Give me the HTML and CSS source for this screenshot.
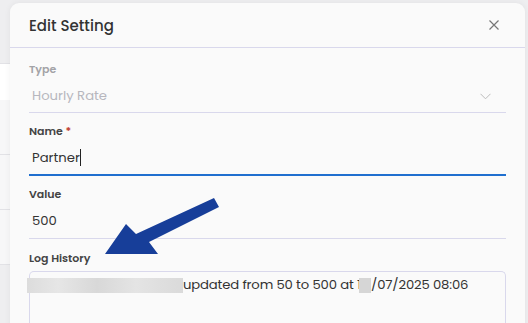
FILE: index.html
```html
<!DOCTYPE html>
<html>
<head>
<meta charset="utf-8">
<link rel="stylesheet" href="styles.css">
</head>
<body>
<div class="backdrop">
  <div class="bg-rows">
    <div class="bg-gap"></div>
    <div class="bg-white"></div>
    <div class="bg-row"></div>
    <div class="bg-row"></div>
    <div class="bg-row"></div>
  </div>
  <div class="modal">
    <div class="modal-header">
      <h2 class="title">Edit Setting</h2>
      <svg class="close" width="10" height="10" viewBox="0 0 10 10"><path d="M0.5 0.5 L9.5 9.5 M9.5 0.5 L0.5 9.5" stroke="#777" stroke-width="1.2" fill="none"/></svg>
    </div>
    <div class="modal-body">
      <div class="field first">
        <div class="label disabled">Type</div>
        <div class="input disabled-input">
          <span>Hourly Rate</span>
          <svg class="chevron" width="11" height="7" viewBox="0 0 11 7"><path d="M0.5 0.8 L5.5 5.8 L10.5 0.8" stroke="#bbb" stroke-width="1" fill="none"/></svg>
        </div>
      </div>
      <div class="field">
        <div class="label">Name <span class="req">*</span></div>
        <div class="input focused"><span>Partner</span><span class="caret"></span></div>
      </div>
      <div class="field">
        <div class="label">Value</div>
        <div class="input"><span>500</span></div>
      </div>
      <div class="field last">
        <div class="label">Log History</div>
        <div class="textarea">
          <div class="log"><span class="redact"></span>updated from 50 to 500 at 1<span class="redact small"></span>/07/2025 08:06</div>
        </div>
      </div>
    </div>
    <svg class="arrow" width="130" height="70" viewBox="0 0 130 70">
      <path d="M110 1 L115 10 L45 45 L54 57 L1 57 L22 27 L32 37 Z" fill="#173e99"/>
    </svg>
  </div>
</div>
</body>
</html>
```
FILE: styles.css
```css
* { box-sizing: border-box; }
html, body { margin: 0; padding: 0; }
body {
  width: 528px;
  height: 323px;
  overflow: hidden;
  background: #eeeef0;
  font-family: "Poppins", "Inter", "Open Sans", sans-serif;
}
.backdrop {
  position: relative;
  width: 528px;
  height: 323px;
  padding: 3px 3px 0 10px;
}
.bg-rows {
  position: absolute;
  left: 0; top: 0;
  width: 12px;
  height: 323px;
  display: flex;
  flex-direction: column;
}
.bg-gap { height: 64px; border-bottom: 1px solid #e2e2e6; }
.bg-white { height: 36px; background: #ffffff; }
.bg-row { height: 55px; border-bottom: 1px solid #e2e2e6; background: #f7f7f8; }
.modal {
  position: relative;
  width: 515px;
  height: 330px;
  background: #fafafa;
  border-radius: 9px 9px 0 0;
  box-shadow: 0 0 6px rgba(0,0,0,0.06);
}
.modal-header {
  height: 45px;
  border-bottom: 1px solid #d9d8ec;
  display: flex;
  align-items: center;
  justify-content: space-between;
  padding: 0 26px 0 19px;
}
.title {
  margin: 0;
  font-size: 15px;
  font-weight: 500;
  color: #333;
}
.close { display: block; margin-top: -1px; }
.modal-body {
  padding: 12px 19px 0 19px;
}
.field { margin-top: 9px; }
.field.first { margin-top: 0; }
.field.last { margin-top: 10px; }
.label {
  height: 18px;
  line-height: 18px;
  font-size: 11px;
  font-weight: 600;
  color: #444;
}
.label.disabled { color: #a3a3a7; }
.req { color: #c0392b; }
.input {
  height: 36px;
  border-bottom: 1px solid #d9d8ec;
  display: flex;
  align-items: center;
  padding: 1px 15px 0 3px;
  font-size: 13.2px;
  color: #333;
}
.disabled-input { color: #b7b7be; justify-content: space-between; height: 35px; padding-top: 2px; }
.chevron { display: block; }
.input.focused {
  border-bottom: 2px solid #1f6fcf;
}
.caret {
  display: inline-block;
  width: 1px;
  height: 17px;
  background: #222;
}
.textarea {
  margin-top: 4px;
  height: 60px;
  border: 1px solid #d9d8ec;
  border-bottom: none;
  border-radius: 5px 5px 0 0;
  padding: 4px 0 0 0;
}
.log {
  margin-left: -3px;
  font-size: 13.2px;
  letter-spacing: -0.15px;
  color: #333;
  line-height: 18px;
  white-space: nowrap;
  display: flex;
  align-items: center;
}
.redact {
  display: inline-block;
  width: 156px;
  height: 15px;
  background: linear-gradient(90deg, #dcdcdc, #e6e6e6 20%, #d8d8d8 45%, #e4e4e4 70%, #dadada);
}
.redact.small {
  width: 12px;
  height: 15px;
  margin-left: -2px;
  background: #d6d6d6;
}
.arrow {
  position: absolute;
  left: 94px;
  top: 194px;
}
```
